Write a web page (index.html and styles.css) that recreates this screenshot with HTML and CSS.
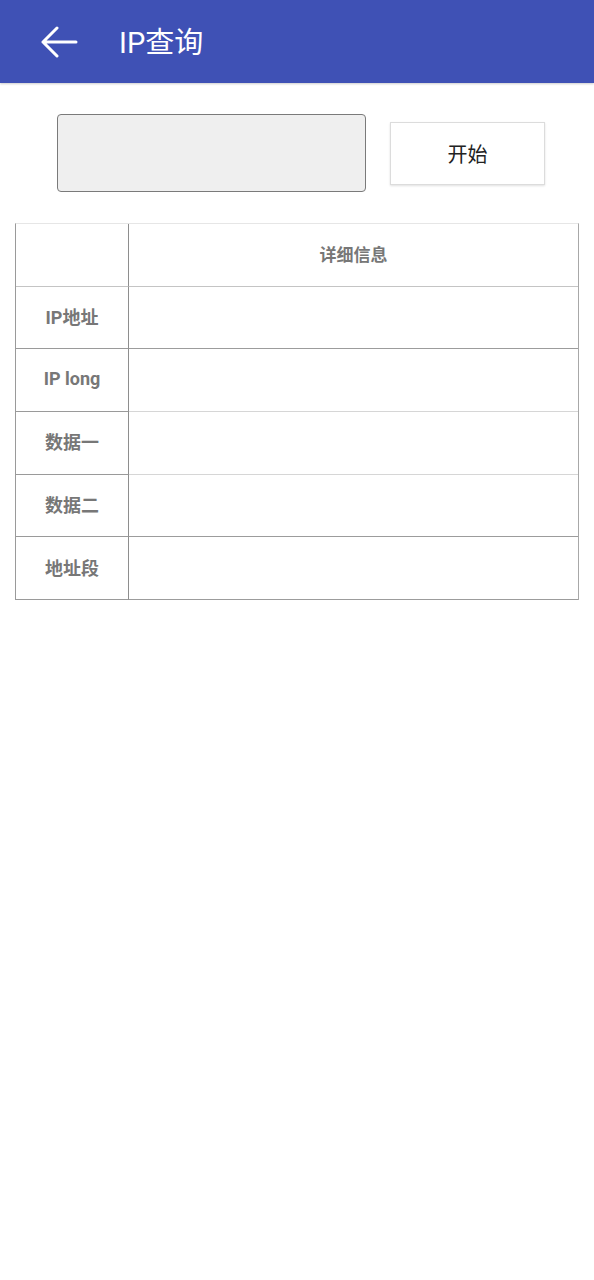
FILE: index.html
```html
<!DOCTYPE html>
<html lang="zh">
<head>
<meta charset="utf-8">
<link rel="stylesheet" href="styles.css">
</head>
<body>
<header class="appbar">
  <svg class="back" width="38" height="32" viewBox="0 0 38 32">
    <path d="M36 16 H3 M17 2 L3 16 L17 30" fill="none" stroke="#fff" stroke-width="3" stroke-linecap="round" stroke-linejoin="round"/>
  </svg>
  <h1 class="title">IP查询</h1>
</header>
<main class="content">
  <div class="form">
    <div class="input"></div>
    <div class="btn">开始</div>
  </div>
  <div class="table">
    <div class="cell key head"></div>
    <div class="cell val head">详细信息</div>
    <div class="cell key">IP地址</div>
    <div class="cell val dark"></div>
    <div class="cell key">IP long</div>
    <div class="cell val"></div>
    <div class="cell key">数据一</div>
    <div class="cell val"></div>
    <div class="cell key">数据二</div>
    <div class="cell val dark"></div>
    <div class="cell key">地址段</div>
    <div class="cell val dark"></div>
  </div>
</main>
</body>
</html>
```
FILE: styles.css
```css
html, body {
  margin: 0;
  padding: 0;
  background: #fff;
  font-family: Roboto, "Noto Sans CJK SC", sans-serif;
}
.appbar {
  height: 83px;
  background: #3f51b5;
  display: flex;
  align-items: center;
  box-shadow: 0 1px 2px rgba(0,0,0,0.2);
}
.back {
  margin-left: 40px;
  margin-top: 0;
}
.title {
  margin: 3px 0 0 41px;
  color: #fff;
  font-size: 29px;
  font-weight: 400;
  line-height: 1;
}
.content {
  padding-top: 31px;
}
.form {
  display: flex;
  align-items: center;
  padding-left: 57px;
  gap: 24px;
}
.input {
  width: 307px;
  height: 76px;
  background: #efefef;
  border: 1px solid #7a7a7a;
  border-radius: 4px;
}
.btn {
  width: 153px;
  height: 61px;
  border: 1px solid #dcdcdc;
  box-shadow: 0 1px 2px rgba(0,0,0,0.12);
  background: #fff;
  display: flex;
  align-items: center;
  justify-content: center;
  font-size: 20px;
  color: #222;
}
.table {
  margin: 31px 0 0 15px;
  width: 564px;
  height: 377px;
  display: grid;
  grid-template-columns: 113px 1fr;
  grid-template-rows: repeat(6, 1fr);
  box-sizing: border-box;
  border-top: 1px solid #e6e6e6;
  border-left: 1px solid #9a9a9a;
  border-right: 1px solid #a8a8a8;
}
.cell {
  display: flex;
  align-items: center;
  justify-content: center;
  box-sizing: border-box;
  padding-bottom: 3px;
  color: #777;
  font-weight: 700;
  font-size: 18px;
}
.key {
  border-right: 1px solid #8e8e8e;
  border-bottom: 1px solid #9a9a9a;
}
.val {
  border-bottom: 1px solid #d6d6d6;
}
.val.dark {
  border-bottom-color: #9c9c9c;
}
.val.head {
  font-size: 17px;
  border-bottom-color: #c4c4c4;
}
.key.head {
  border-bottom-color: #c4c4c4;
}
```
